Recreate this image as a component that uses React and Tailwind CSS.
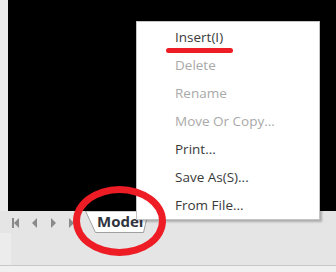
import React from "react";

const items = [
  { label: "Insert(I)", enabled: true },
  { label: "Delete", enabled: false },
  { label: "Rename", enabled: false },
  { label: "Move Or Copy...", enabled: false },
  { label: "Print...", enabled: true },
  { label: "Save As(S)...", enabled: true },
  { label: "From File...", enabled: true },
];

const NavArrows = () => (
  <svg width="70" height="12" viewBox="0 0 70 12" className="fill-[#8a8a8a]">
    <rect x="0" y="1" width="2" height="10" />
    <polygon points="7,1 2,6 7,11" />
    <polygon points="25,1 20,6 25,11" />
    <polygon points="39,1 44,6 39,11" />
    <polygon points="57,1 62,6 57,11" />
  </svg>
);

const App = () => {
  return (
    <div className="relative w-[336px] h-[272px] overflow-hidden bg-[#e5e5e5] font-['Open_Sans',sans-serif]">
      <div className="flex h-[211px]">
        <div className="w-[8px] bg-[#ebebeb]" />
        <div className="flex-1 bg-black" />
      </div>

      <div className="flex h-[22px] items-center">
        <div className="pl-[12px] pt-[1px]">
          <NavArrows />
        </div>
        <div className="relative ml-[3px] h-[22px] w-[66px]">
          <svg width="66" height="22" viewBox="0 0 66 22" className="absolute left-0 top-0">
            <polygon points="0.5,0 10.5,21.5 58.5,21.5 63.5,0" fill="#ffffff" stroke="#a0a0a0" />
          </svg>
          <span className="absolute left-[12px] top-[1px] text-[15px] font-bold leading-[19px] text-[#2f3440]">Model</span>
        </div>
      </div>

      <div className="flex h-[32px]">
        <div className="w-[11px] bg-[#ececec]" />
      </div>
      <div className="h-px bg-[#c8c8c8]" />
      <div className="h-[6px] bg-[#f0f0f0]" />

      <div className="absolute left-[136px] top-[21px] w-[184px] h-[199px] bg-white border border-[#c4c4c4] shadow-[2px_2px_2px_rgba(0,0,0,0.25)] pt-[5px]">
        {items.map((item) => (
          <div
            key={item.label}
            className={`h-[28px] pl-[38px] text-[13.5px] leading-[21px] ${item.enabled ? "text-[#3a3a3a]" : "text-[#a9a9a9]"}`}
          >
            {item.label}
          </div>
        ))}
      </div>

      <div className="absolute left-[166px] top-[48px] w-[67px] h-[5px] rounded-full bg-[#ee1c24]" />

      <div className="absolute left-[73px] top-[186px] w-[93px] h-[70px] rounded-[50%] border-[7px] border-[#ee1c24]" />
    </div>
  );
};

export default App;
